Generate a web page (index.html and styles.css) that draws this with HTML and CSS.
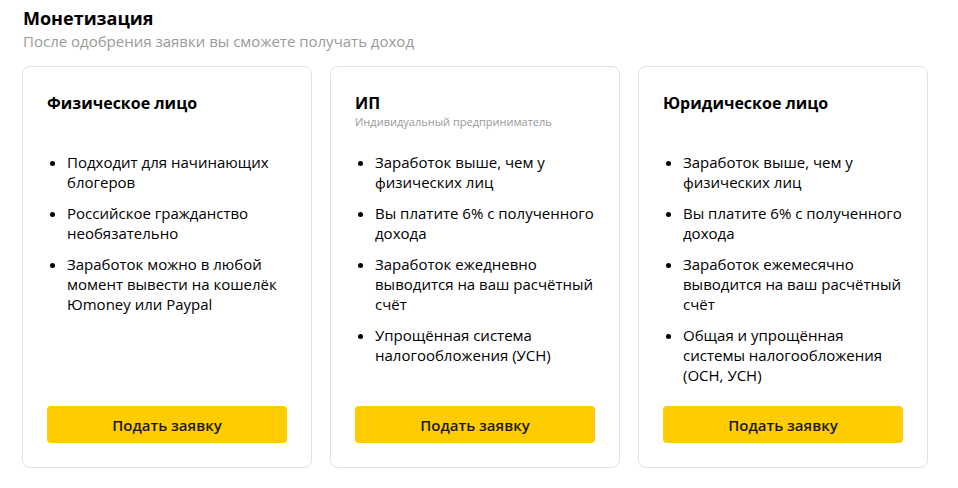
FILE: index.html
```html
<!DOCTYPE html>
<html lang="ru">
<head>
<meta charset="utf-8">
<link rel="stylesheet" href="styles.css">
</head>
<body>
<div class="page">
  <h1 class="title">Монетизация</h1>
  <p class="subtitle">После одобрения заявки вы сможете получать доход</p>
  <div class="cards">
    <div class="card">
      <div class="card-head">
        <h2 class="card-title">Физическое лицо</h2>
      </div>
      <ul class="list">
        <li>Подходит для начинающих блогеров</li>
        <li>Российское гражданство необязательно</li>
        <li>Заработок можно в любой момент вывести на кошелёк Юmoney или Paypal</li>
      </ul>
      <button class="btn">Подать заявку</button>
    </div>
    <div class="card">
      <div class="card-head">
        <h2 class="card-title">ИП</h2>
        <div class="card-sub">Индивидуальный предприниматель</div>
      </div>
      <ul class="list">
        <li>Заработок выше, чем у физических лиц</li>
        <li>Вы платите 6% с полученного дохода</li>
        <li>Заработок ежедневно выводится на ваш расчётный счёт</li>
        <li>Упрощённая система налогообложения (УСН)</li>
      </ul>
      <button class="btn">Подать заявку</button>
    </div>
    <div class="card">
      <div class="card-head">
        <h2 class="card-title">Юридическое лицо</h2>
      </div>
      <ul class="list">
        <li>Заработок выше, чем у физических лиц</li>
        <li>Вы платите 6% с полученного дохода</li>
        <li>Заработок ежемесячно выводится на ваш расчётный счёт</li>
        <li>Общая и упрощённая системы налогообложения (ОСН, УСН)</li>
      </ul>
      <button class="btn">Подать заявку</button>
    </div>
  </div>
</div>
</body>
</html>
```
FILE: styles.css
```css
* { box-sizing: border-box; }
html, body { margin: 0; padding: 0; background: #fff; }
body {
  font-family: "Open Sans", "Liberation Sans", sans-serif;
  color: #000;
}
.page {
  padding: 5px 32px 0 22px;
}
.title {
  margin: 0;
  font-size: 18px;
  line-height: 26px;
  font-weight: 700;
  padding-left: 1px;
}
.subtitle {
  margin: 0;
  font-size: 15px;
  line-height: 20px;
  color: #9a9a9a;
  padding-left: 1px;
}
.cards {
  margin-top: 15px;
  display: grid;
  grid-template-columns: repeat(3, 1fr);
  gap: 18px;
}
.card {
  border: 1px solid #e2e2e2;
  border-radius: 8px;
  padding: 25px 24px 24px 24px;
  display: flex;
  flex-direction: column;
  height: 402px;
}
.card-head {
  height: 46px;
}
.card-title {
  margin: 0;
  font-size: 16px;
  line-height: 22px;
  font-weight: 700;
}
.card-sub {
  font-size: 11px;
  line-height: 14px;
  color: #999;
  margin-top: 1px;
}
.list {
  margin: 14px 0 0 0;
  padding: 0 0 0 20px;
  font-size: 15px;
  line-height: 20px;
  flex: 1;
}
.list li {
  margin-bottom: 11px;
}
.btn {
  border: none;
  background: #ffcc00;
  border-radius: 4px;
  height: 37px;
  width: 240px;
  font-family: inherit;
  font-size: 15px;
  font-weight: 600;
  color: #1a1a1a;
  cursor: pointer;
}
```
